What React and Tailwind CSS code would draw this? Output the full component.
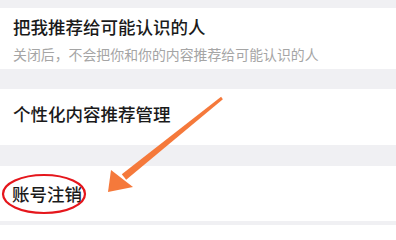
import React from "react";

const font = { fontFamily: '"Noto Sans CJK SC", "Noto Sans", sans-serif' };

export default function App() {
  return (
    <div
      className="relative w-[396px] h-[225px] overflow-hidden bg-[#f0f0f3]"
      style={font}
    >
      <div className="h-[8px]" />
      <div className="h-[61px] bg-white pl-[13px] flex flex-col">
        <div className="mt-[8px] text-[17.5px] leading-[22px] font-medium text-[#1a1a1a]">
          把我推荐给可能认识的人
        </div>
        <div className="mt-[7px] text-[13.9px] leading-[18px] text-[#a5a5a5]">
          关闭后，不会把你和你的内容推荐给可能认识的人
        </div>
      </div>
      <div className="h-[20px]" />
      <div className="h-[56px] bg-white pl-[13px] flex items-center">
        <div className="text-[17.5px] leading-[22px] font-medium text-[#1a1a1a] -mt-[7px]">
          个性化内容推荐管理
        </div>
      </div>
      <div className="h-[21px]" />
      <div className="h-[55px] bg-white pl-[12px] flex items-center">
        <div className="text-[17.5px] leading-[22px] font-medium text-[#1a1a1a] mt-[1px]">
          账号注销
        </div>
      </div>

      <svg
        className="absolute left-0 top-0 pointer-events-none"
        width="396"
        height="225"
        viewBox="0 0 396 225"
      >
        <ellipse
          cx="44"
          cy="194"
          rx="41"
          ry="19"
          fill="none"
          stroke="#e5161c"
          strokeWidth="2.2"
        />
        <polygon
          points="222.9,99.2 221.1,96.8 121.8,174.3 126.2,179.7"
          fill="#f5793b"
        />
        <polygon points="111,170 108,192 133,187" fill="#f5793b" />
      </svg>
    </div>
  );
}
